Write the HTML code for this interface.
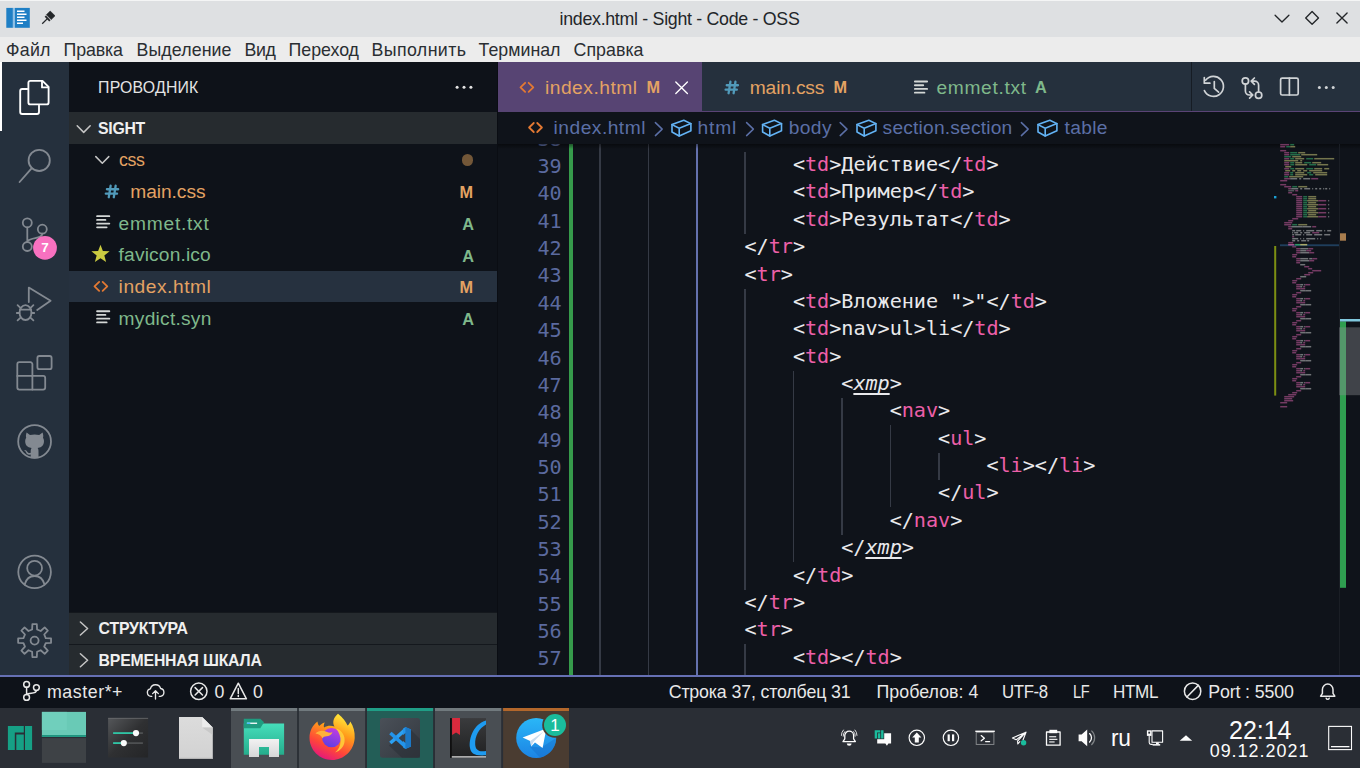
<!DOCTYPE html>
<html lang="ru"><head><meta charset="utf-8"><title>index.html - Sight - Code - OSS</title>
<style>
html,body{margin:0;padding:0;width:1360px;height:768px;overflow:hidden;background:#0f131a;}
body{position:relative;font-family:"Liberation Sans", "DejaVu Sans", sans-serif;-webkit-font-smoothing:antialiased;}
.b{position:absolute;}
.t{position:absolute;white-space:pre;}
svg{position:absolute;overflow:visible;}
.code{position:absolute;white-space:pre;font-family:"DejaVu Sans Mono", "Liberation Mono", monospace;font-size:20.16px;line-height:27.36px;color:#e9e9ec;letter-spacing:-0.04px;}
.code i{font-style:normal;color:#ec5fa8;}
.code u{font-style:italic;text-decoration:underline;text-decoration-thickness:1.5px;text-underline-offset:3px;text-decoration-skip-ink:none;}
.ln{position:absolute;white-space:pre;font-family:"DejaVu Sans Mono", "Liberation Mono", monospace;font-size:20.16px;letter-spacing:-0.1px;line-height:27.36px;color:#5b6a9f;text-align:right;width:60px;}
</style></head><body>
<div class="b" style="left:0px;top:0px;width:1360px;height:37px;background:#dee0e2;"></div>
<div class="b" style="left:0px;top:0px;width:1360px;height:1px;background:#f4f5f5;"></div>
<div class="b" style="left:0px;top:37px;width:1360px;height:25px;background:#ececec;"></div>
<span class="t" style="left:559.6px;top:7.37px;font-size:17.8px;line-height:24.92px;color:#232629;letter-spacing:-0.295px;">index.html - Sight - Code - OSS</span>
<span class="t" style="left:6px;top:37.77px;font-size:17.8px;line-height:24.92px;color:#2a2e32;letter-spacing:0.26px;">Файл</span>
<span class="t" style="left:63.5px;top:37.77px;font-size:17.8px;line-height:24.92px;color:#2a2e32;letter-spacing:-0.116px;">Правка</span>
<span class="t" style="left:136.5px;top:37.77px;font-size:17.8px;line-height:24.92px;color:#2a2e32;letter-spacing:0.096px;">Выделение</span>
<span class="t" style="left:244.5px;top:37.77px;font-size:17.8px;line-height:24.92px;color:#2a2e32;letter-spacing:-0.336px;">Вид</span>
<span class="t" style="left:288.5px;top:37.77px;font-size:17.8px;line-height:24.92px;color:#2a2e32;letter-spacing:-0.021px;">Переход</span>
<span class="t" style="left:371.5px;top:37.77px;font-size:17.8px;line-height:24.92px;color:#2a2e32;letter-spacing:0.398px;">Выполнить</span>
<span class="t" style="left:478.5px;top:37.77px;font-size:17.8px;line-height:24.92px;color:#2a2e32;letter-spacing:0.016px;">Терминал</span>
<span class="t" style="left:573.5px;top:37.77px;font-size:17.8px;line-height:24.92px;color:#2a2e32;letter-spacing:0.039px;">Справка</span>
<div class="b" style="left:0px;top:62.0px;width:69.1px;height:614.3px;background:#25303d;"></div>
<div class="b" style="left:69.1px;top:62.0px;width:428.9px;height:614.3px;background:#0e1219;"></div>
<div class="b" style="left:497px;top:62.0px;width:1px;height:614.3px;background:#0a0d13;"></div>
<div class="b" style="left:498px;top:62.0px;width:862px;height:614.3px;background:#0f131a;"></div>
<div class="b" style="left:0px;top:62.0px;width:2.2px;height:69.1px;background:#ffffff;"></div>
<span class="t" style="left:98.1px;top:77.22px;font-size:15.84px;line-height:22.18px;color:#e4e4e4;letter-spacing:0.195px;">ПРОВОДНИК</span>
<div class="b" style="left:69.1px;top:112.4px;width:427.9px;height:31.68px;background:#262b2f;"></div>
<span class="t" style="left:98.1px;top:118.22px;font-size:15.84px;line-height:22.18px;color:#f0f0f0;letter-spacing:-0.319px;font-weight:700;">SIGHT</span>
<div class="b" style="left:69.1px;top:270.8px;width:427.9px;height:31.68px;background:#26313f;"></div>
<span class="t" style="left:118.6px;top:147.31px;font-size:19.2px;line-height:26.88px;color:#e3a263;letter-spacing:-0.35px;transform:scaleX(0.9259);transform-origin:0 0;">css</span>
<span class="t" style="left:130.3px;top:178.99px;font-size:19.2px;line-height:26.88px;color:#e3a263;letter-spacing:-0.072px;">main.css</span>
<span class="t" style="left:118.6px;top:210.67px;font-size:19.2px;line-height:26.88px;color:#7fb88b;letter-spacing:0.746px;">emmet.txt</span>
<span class="t" style="left:118.6px;top:242.35px;font-size:19.2px;line-height:26.88px;color:#7fb88b;letter-spacing:0.154px;">favicon.ico</span>
<span class="t" style="left:118.6px;top:274.03px;font-size:19.2px;line-height:26.88px;color:#e3a263;letter-spacing:0.527px;">index.html</span>
<span class="t" style="left:118.6px;top:305.71px;font-size:19.2px;line-height:26.88px;color:#7fb88b;letter-spacing:0.24px;">mydict.syn</span>
<span class="t" style="left:459.4px;top:181.22px;font-size:16.3px;line-height:22.82px;color:#e3a263;letter-spacing:0px;font-weight:700;">M</span>
<span class="t" style="left:462.2px;top:212.9px;font-size:16.3px;line-height:22.82px;color:#7fb88b;letter-spacing:0px;font-weight:700;">A</span>
<span class="t" style="left:462.2px;top:244.58px;font-size:16.3px;line-height:22.82px;color:#7fb88b;letter-spacing:0px;font-weight:700;">A</span>
<span class="t" style="left:459.4px;top:276.26px;font-size:16.3px;line-height:22.82px;color:#e3a263;letter-spacing:0px;font-weight:700;">M</span>
<span class="t" style="left:462.2px;top:307.94px;font-size:16.3px;line-height:22.82px;color:#7fb88b;letter-spacing:0px;font-weight:700;">A</span>
<div class="b" style="left:461.7px;top:154.32000000000002px;width:11.2px;height:11.2px;border-radius:50%;background:#735738"></div>
<div class="b" style="left:69.1px;top:612.96px;width:427.9px;height:31.68px;background:#262b2f;"></div>
<div class="b" style="left:69.1px;top:644.64px;width:427.9px;height:31.68px;background:#262b2f;"></div>
<div class="b" style="left:69.1px;top:643.7px;width:427.9px;height:1.4px;background:#14181d;"></div>
<div class="b" style="left:69.1px;top:612.2px;width:427.9px;height:1.2px;background:#14181d;"></div>
<span class="t" style="left:98.6px;top:618.12px;font-size:15.84px;line-height:22.18px;color:#f0f0f0;letter-spacing:-0.21px;font-weight:700;">СТРУКТУРА</span>
<span class="t" style="left:98.6px;top:650.02px;font-size:15.84px;line-height:22.18px;color:#f0f0f0;letter-spacing:-0.2px;font-weight:700;">ВРЕМЕННАЯ ШКАЛА</span>
<div class="b" style="left:498px;top:62.0px;width:862px;height:50.4px;background:#25303d;"></div>
<div class="b" style="left:498px;top:62.0px;width:204px;height:50.4px;background:#574473;"></div>
<div class="b" style="left:702px;top:110.6px;width:658px;height:1.4px;background:#5a4375;"></div>
<div class="b" style="left:1191px;top:62.0px;width:1.3px;height:49px;background:#161c24;"></div>
<span class="t" style="left:545px;top:74.81px;font-size:19.2px;line-height:26.88px;color:#e3a263;letter-spacing:0.505px;">index.html</span>
<span class="t" style="left:646.6px;top:76.04px;font-size:16.3px;line-height:22.82px;color:#e3a263;letter-spacing:0px;font-weight:700;">M</span>
<span class="t" style="left:749.8px;top:74.81px;font-size:19.2px;line-height:26.88px;color:#e3a263;letter-spacing:-0.158px;">main.css</span>
<span class="t" style="left:833.5px;top:76.04px;font-size:16.3px;line-height:22.82px;color:#e3a263;letter-spacing:0px;font-weight:700;">M</span>
<span class="t" style="left:936.4px;top:74.81px;font-size:19.2px;line-height:26.88px;color:#7fb88b;letter-spacing:0.683px;">emmet.txt</span>
<span class="t" style="left:1035px;top:76.04px;font-size:16.3px;line-height:22.82px;color:#7fb88b;letter-spacing:0px;font-weight:700;">A</span>
<div class="b" style="left:498px;top:112.4px;width:862px;height:31.1px;background:#0f131a;"></div>
<span class="t" style="left:553.6px;top:115.21px;font-size:19.2px;line-height:26.88px;color:#5b6fa6;letter-spacing:0.483px;">index.html</span>
<span class="t" style="left:697.6px;top:115.21px;font-size:19.2px;line-height:26.88px;color:#5b6fa6;letter-spacing:0.783px;">html</span>
<span class="t" style="left:788.7px;top:115.21px;font-size:19.2px;line-height:26.88px;color:#5b6fa6;letter-spacing:0.397px;">body</span>
<span class="t" style="left:882.6px;top:115.21px;font-size:19.2px;line-height:26.88px;color:#5b6fa6;letter-spacing:0.198px;">section.section</span>
<span class="t" style="left:1064.5px;top:115.21px;font-size:19.2px;line-height:26.88px;color:#5b6fa6;letter-spacing:0.348px;">table</span>
<div class="b" style="left:498px;top:143.5px;width:862px;height:532.8px;overflow:hidden">
<div class="b" style="left:71px;top:0px;width:4.3px;height:532.8px;background:#369b4b;"></div>
<div class="b" style="left:101.2px;top:-73.78px;width:1.44px;height:684.0px;background:#353a45;"></div>
<div class="b" style="left:149.5px;top:-73.78px;width:1.44px;height:684.0px;background:#353a45;"></div>
<div class="b" style="left:198.2px;top:-73.78px;width:1.44px;height:684.0px;background:#6471ad;"></div>
<div class="b" style="left:246.3px;top:8.3px;width:1.44px;height:82.08px;background:#353a45;"></div>
<div class="b" style="left:246.3px;top:145.1px;width:1.44px;height:300.96px;background:#353a45;"></div>
<div class="b" style="left:246.3px;top:500.78px;width:1.44px;height:109.44px;background:#353a45;"></div>
<div class="b" style="left:295.0px;top:227.18px;width:1.44px;height:191.52px;background:#353a45;"></div>
<div class="b" style="left:343.3px;top:254.54px;width:1.44px;height:136.8px;background:#353a45;"></div>
<div class="b" style="left:391.6px;top:281.9px;width:1.44px;height:82.08px;background:#353a45;"></div>
<div class="b" style="left:440.2px;top:309.26px;width:1.44px;height:27.36px;background:#353a45;"></div>
<div class="ln" style="left:3.6000000000000227px;top:-17.86px">38</div>
<div class="ln" style="left:3.6000000000000227px;top:9.5px">39</div>
<div class="code" style="left:294.88px;top:7.6px">&lt;<i>td</i>>Действие&lt;/<i>td</i>></div>
<div class="ln" style="left:3.6000000000000227px;top:36.86px">40</div>
<div class="code" style="left:294.88px;top:34.96px">&lt;<i>td</i>>Пример&lt;/<i>td</i>></div>
<div class="ln" style="left:3.6000000000000227px;top:64.22px">41</div>
<div class="code" style="left:294.88px;top:62.32px">&lt;<i>td</i>>Результат&lt;/<i>td</i>></div>
<div class="ln" style="left:3.6000000000000227px;top:91.58px">42</div>
<div class="code" style="left:246.5px;top:89.68px">&lt;/<i>tr</i>></div>
<div class="ln" style="left:3.6000000000000227px;top:118.94px">43</div>
<div class="code" style="left:246.5px;top:117.04px">&lt;<i>tr</i>></div>
<div class="ln" style="left:3.6000000000000227px;top:146.3px">44</div>
<div class="code" style="left:294.88px;top:144.4px">&lt;<i>td</i>>Вложение ">"&lt;/<i>td</i>></div>
<div class="ln" style="left:3.6000000000000227px;top:173.66px">45</div>
<div class="code" style="left:294.88px;top:171.76px">&lt;<i>td</i>>nav>ul>li&lt;/<i>td</i>></div>
<div class="ln" style="left:3.6000000000000227px;top:201.02px">46</div>
<div class="code" style="left:294.88px;top:199.12px">&lt;<i>td</i>></div>
<div class="ln" style="left:3.6000000000000227px;top:228.38px">47</div>
<div class="code" style="left:343.27px;top:226.48px">&lt;<u>xmp</u>></div>
<div class="ln" style="left:3.6000000000000227px;top:255.74px">48</div>
<div class="code" style="left:391.65px;top:253.84px">&lt;<i>nav</i>></div>
<div class="ln" style="left:3.6000000000000227px;top:283.1px">49</div>
<div class="code" style="left:440.04px;top:281.2px">&lt;<i>ul</i>></div>
<div class="ln" style="left:3.6000000000000227px;top:310.46px">50</div>
<div class="code" style="left:488.42px;top:308.56px">&lt;<i>li</i>>&lt;/<i>li</i>></div>
<div class="ln" style="left:3.6000000000000227px;top:337.82px">51</div>
<div class="code" style="left:440.04px;top:335.92px">&lt;/<i>ul</i>></div>
<div class="ln" style="left:3.6000000000000227px;top:365.18px">52</div>
<div class="code" style="left:391.65px;top:363.28px">&lt;/<i>nav</i>></div>
<div class="ln" style="left:3.6000000000000227px;top:392.54px">53</div>
<div class="code" style="left:343.27px;top:390.64px">&lt;/<u>xmp</u>></div>
<div class="ln" style="left:3.6000000000000227px;top:419.9px">54</div>
<div class="code" style="left:294.88px;top:418.0px">&lt;/<i>td</i>></div>
<div class="ln" style="left:3.6000000000000227px;top:447.26px">55</div>
<div class="code" style="left:246.5px;top:445.36px">&lt;/<i>tr</i>></div>
<div class="ln" style="left:3.6000000000000227px;top:474.62px">56</div>
<div class="code" style="left:246.5px;top:472.72px">&lt;<i>tr</i>></div>
<div class="ln" style="left:3.6000000000000227px;top:501.98px">57</div>
<div class="code" style="left:294.88px;top:500.08px">&lt;<i>td</i>>&lt;/<i>td</i>></div>
<div class="b" style="left:0;top:0;width:862px;height:5px;background:linear-gradient(#0007,#0000)"></div>
</div>
<svg style="left:0px;top:0px" width="1360" height="768" viewBox="0 0 1360 768" ><g opacity="0.66"><rect x="1280.2" y="143.95" width="9.0" height="1.5" fill="#a8508a"/><rect x="1290.2" y="143.95" width="4.0" height="1.5" fill="#2f9a62"/><rect x="1280.2" y="145.95" width="5.0" height="1.5" fill="#a8508a"/><rect x="1286.2" y="145.95" width="4.0" height="1.5" fill="#2f9a62"/><rect x="1290.2" y="145.95" width="5.0" height="1.5" fill="#a9a868"/><rect x="1280.2" y="149.95" width="6.0" height="1.5" fill="#a8508a"/><rect x="1284.2" y="151.95" width="5.0" height="1.5" fill="#a8508a"/><rect x="1290.2" y="151.95" width="7.0" height="1.5" fill="#2f9a62"/><rect x="1298.2" y="151.95" width="7.0" height="1.5" fill="#a9a868"/><rect x="1284.2" y="153.95" width="5.0" height="1.5" fill="#a8508a"/><rect x="1290.2" y="153.95" width="10.0" height="1.5" fill="#2f9a62"/><rect x="1301.2" y="153.95" width="16.0" height="1.5" fill="#a9a868"/><rect x="1284.2" y="155.95" width="7.0" height="1.5" fill="#2f9a62"/><rect x="1292.2" y="155.95" width="9.0" height="1.5" fill="#a9a868"/><rect x="1284.2" y="157.95" width="5.0" height="1.5" fill="#a8508a"/><rect x="1290.2" y="157.95" width="4.0" height="1.5" fill="#2f9a62"/><rect x="1295.2" y="157.95" width="9.0" height="1.5" fill="#a9a868"/><rect x="1306.2" y="157.95" width="7.0" height="1.5" fill="#2f9a62"/><rect x="1314.2" y="157.95" width="20.0" height="1.5" fill="#a9a868"/><rect x="1284.2" y="159.95" width="14.0" height="1.5" fill="#a9a868"/><rect x="1300.2" y="159.95" width="2.0" height="1.5" fill="#a9a868"/><rect x="1284.2" y="161.95" width="5.0" height="1.5" fill="#a8508a"/><rect x="1290.2" y="161.95" width="4.0" height="1.5" fill="#2f9a62"/><rect x="1295.2" y="161.95" width="7.0" height="1.5" fill="#a9a868"/><rect x="1304.2" y="161.95" width="7.0" height="1.5" fill="#2f9a62"/><rect x="1312.2" y="161.95" width="9.0" height="1.5" fill="#a9a868"/><rect x="1284.2" y="163.95" width="5.0" height="1.5" fill="#a8508a"/><rect x="1290.2" y="163.95" width="4.0" height="1.5" fill="#2f9a62"/><rect x="1295.2" y="163.95" width="12.0" height="1.5" fill="#a9a868"/><rect x="1309.2" y="163.95" width="7.0" height="1.5" fill="#2f9a62"/><rect x="1317.2" y="163.95" width="11.0" height="1.5" fill="#a9a868"/><rect x="1285.2" y="165.95" width="6.0" height="1.5" fill="#a9a868"/><rect x="1284.2" y="167.95" width="5.0" height="1.5" fill="#a8508a"/><rect x="1290.2" y="167.95" width="4.0" height="1.5" fill="#2f9a62"/><rect x="1295.2" y="167.95" width="9.0" height="1.5" fill="#a9a868"/><rect x="1306.2" y="167.95" width="7.0" height="1.5" fill="#2f9a62"/><rect x="1314.2" y="167.95" width="8.0" height="1.5" fill="#a9a868"/><rect x="1324.2" y="167.95" width="5.0" height="1.5" fill="#a9a868"/><rect x="1285.2" y="169.95" width="5.0" height="1.5" fill="#a9a868"/><rect x="1292.2" y="169.95" width="3.0" height="1.5" fill="#a9a868"/><rect x="1297.2" y="169.95" width="4.0" height="1.5" fill="#a9a868"/><rect x="1303.2" y="169.95" width="4.0" height="1.5" fill="#a9a868"/><rect x="1309.2" y="169.95" width="13.0" height="1.5" fill="#a9a868"/><rect x="1284.2" y="171.95" width="5.0" height="1.5" fill="#a8508a"/><rect x="1290.2" y="171.95" width="3.0" height="1.5" fill="#2f9a62"/><rect x="1295.2" y="171.95" width="9.0" height="1.5" fill="#a9a868"/><rect x="1307.2" y="171.95" width="4.0" height="1.5" fill="#2f9a62"/><rect x="1313.2" y="171.95" width="14.0" height="1.5" fill="#a9a868"/><rect x="1284.2" y="173.95" width="5.0" height="1.5" fill="#a8508a"/><rect x="1290.2" y="173.95" width="3.0" height="1.5" fill="#2f9a62"/><rect x="1295.2" y="173.95" width="12.0" height="1.5" fill="#a9a868"/><rect x="1309.2" y="173.95" width="4.0" height="1.5" fill="#2f9a62"/><rect x="1315.2" y="173.95" width="12.0" height="1.5" fill="#a9a868"/><rect x="1284.2" y="175.95" width="4.0" height="1.5" fill="#2f9a62"/><rect x="1289.2" y="175.95" width="14.0" height="1.5" fill="#a9a868"/><rect x="1284.2" y="177.95" width="6.0" height="1.5" fill="#a8508a"/><rect x="1290.2" y="177.95" width="7.0" height="1.5" fill="#a4a6a8"/><rect x="1299.2" y="177.95" width="2.0" height="1.5" fill="#a4a6a8"/><rect x="1303.2" y="177.95" width="7.0" height="1.5" fill="#a4a6a8"/><rect x="1311.2" y="177.95" width="7.0" height="1.5" fill="#a8508a"/><rect x="1280.2" y="179.95" width="7.0" height="1.5" fill="#a8508a"/><rect x="1280.2" y="183.95" width="6.0" height="1.5" fill="#a8508a"/><rect x="1284.2" y="185.95" width="7.0" height="1.5" fill="#a8508a"/><rect x="1292.2" y="185.95" width="5.0" height="1.5" fill="#2f9a62"/><rect x="1298.2" y="185.95" width="9.0" height="1.5" fill="#a9a868"/><rect x="1288.2" y="187.95" width="3.0" height="1.5" fill="#a8508a"/><rect x="1291.2" y="187.95" width="7.0" height="1.5" fill="#a4a6a8"/><rect x="1300.2" y="187.95" width="2.0" height="1.5" fill="#a4a6a8"/><rect x="1304.2" y="187.95" width="6.0" height="1.5" fill="#a4a6a8"/><rect x="1312.2" y="187.95" width="1.0" height="1.5" fill="#a4a6a8"/><rect x="1315.2" y="187.95" width="2.0" height="1.5" fill="#a4a6a8"/><rect x="1319.2" y="187.95" width="2.0" height="1.5" fill="#a4a6a8"/><rect x="1323.2" y="187.95" width="1.0" height="1.5" fill="#a4a6a8"/><rect x="1325.2" y="187.95" width="2.0" height="1.5" fill="#a4a6a8"/><rect x="1329.2" y="187.95" width="1.0" height="1.5" fill="#a4a6a8"/><rect x="1288.2" y="189.95" width="6.0" height="1.5" fill="#74787d"/><rect x="1295.2" y="189.95" width="3.0" height="1.5" fill="#a8508a"/><rect x="1288.2" y="191.95" width="4.0" height="1.5" fill="#a8508a"/><rect x="1292.2" y="193.95" width="5.0" height="1.5" fill="#a8508a"/><rect x="1296.2" y="195.95" width="6.0" height="1.5" fill="#a8508a"/><rect x="1303.2" y="195.95" width="4.0" height="1.5" fill="#2f9a62"/><rect x="1308.2" y="195.95" width="8.0" height="1.5" fill="#a9a868"/><rect x="1296.2" y="197.95" width="6.0" height="1.5" fill="#a8508a"/><rect x="1303.2" y="197.95" width="4.0" height="1.5" fill="#2f9a62"/><rect x="1308.2" y="197.95" width="8.0" height="1.5" fill="#a9a868"/><rect x="1296.2" y="199.95" width="6.0" height="1.5" fill="#a8508a"/><rect x="1303.2" y="199.95" width="4.0" height="1.5" fill="#2f9a62"/><rect x="1307.2" y="199.95" width="11.0" height="1.5" fill="#a9a868"/><rect x="1318.2" y="199.95" width="8.0" height="1.5" fill="#a8508a"/><rect x="1328.2" y="199.95" width="1.0" height="1.5" fill="#a4a6a8"/><rect x="1296.2" y="201.95" width="6.0" height="1.5" fill="#a8508a"/><rect x="1303.2" y="201.95" width="4.0" height="1.5" fill="#2f9a62"/><rect x="1308.2" y="201.95" width="8.0" height="1.5" fill="#a9a868"/><rect x="1296.2" y="203.95" width="6.0" height="1.5" fill="#a8508a"/><rect x="1303.2" y="203.95" width="4.0" height="1.5" fill="#2f9a62"/><rect x="1307.2" y="203.95" width="11.0" height="1.5" fill="#a9a868"/><rect x="1318.2" y="203.95" width="8.0" height="1.5" fill="#a8508a"/><rect x="1328.2" y="203.95" width="1.0" height="1.5" fill="#a4a6a8"/><rect x="1296.2" y="205.95" width="6.0" height="1.5" fill="#a8508a"/><rect x="1303.2" y="205.95" width="4.0" height="1.5" fill="#2f9a62"/><rect x="1308.2" y="205.95" width="8.0" height="1.5" fill="#a9a868"/><rect x="1296.2" y="207.95" width="6.0" height="1.5" fill="#a8508a"/><rect x="1303.2" y="207.95" width="4.0" height="1.5" fill="#2f9a62"/><rect x="1307.2" y="207.95" width="11.0" height="1.5" fill="#a9a868"/><rect x="1318.2" y="207.95" width="8.0" height="1.5" fill="#a8508a"/><rect x="1328.2" y="207.95" width="1.0" height="1.5" fill="#a4a6a8"/><rect x="1296.2" y="209.95" width="6.0" height="1.5" fill="#a8508a"/><rect x="1303.2" y="209.95" width="4.0" height="1.5" fill="#2f9a62"/><rect x="1308.2" y="209.95" width="8.0" height="1.5" fill="#a9a868"/><rect x="1296.2" y="211.95" width="6.0" height="1.5" fill="#a8508a"/><rect x="1303.2" y="211.95" width="4.0" height="1.5" fill="#2f9a62"/><rect x="1307.2" y="211.95" width="11.0" height="1.5" fill="#a9a868"/><rect x="1318.2" y="211.95" width="8.0" height="1.5" fill="#a8508a"/><rect x="1328.2" y="211.95" width="1.0" height="1.5" fill="#a4a6a8"/><rect x="1296.2" y="213.95" width="6.0" height="1.5" fill="#a8508a"/><rect x="1303.2" y="213.95" width="4.0" height="1.5" fill="#2f9a62"/><rect x="1308.2" y="213.95" width="8.0" height="1.5" fill="#a9a868"/><rect x="1296.2" y="215.95" width="6.0" height="1.5" fill="#a8508a"/><rect x="1303.2" y="215.95" width="4.0" height="1.5" fill="#2f9a62"/><rect x="1307.2" y="215.95" width="11.0" height="1.5" fill="#a9a868"/><rect x="1318.2" y="215.95" width="8.0" height="1.5" fill="#a8508a"/><rect x="1328.2" y="215.95" width="1.0" height="1.5" fill="#a4a6a8"/><rect x="1292.2" y="217.95" width="6.0" height="1.5" fill="#a8508a"/><rect x="1288.2" y="219.95" width="5.0" height="1.5" fill="#a8508a"/><rect x="1284.2" y="221.95" width="8.0" height="1.5" fill="#a8508a"/><rect x="1284.2" y="223.95" width="7.0" height="1.5" fill="#a8508a"/><rect x="1292.2" y="223.95" width="5.0" height="1.5" fill="#2f9a62"/><rect x="1298.2" y="223.95" width="9.0" height="1.5" fill="#a9a868"/><rect x="1288.2" y="225.95" width="3.0" height="1.5" fill="#a8508a"/><rect x="1291.2" y="225.95" width="11.0" height="1.5" fill="#a4a6a8"/><rect x="1302.2" y="225.95" width="9.0" height="1.5" fill="#a4a6a8"/><rect x="1312.2" y="225.95" width="4.0" height="1.5" fill="#a8508a"/><rect x="1288.2" y="227.95" width="4.0" height="1.5" fill="#a8508a"/><rect x="1292.2" y="229.95" width="3.0" height="1.5" fill="#a4a6a8"/><rect x="1296.2" y="229.95" width="5.0" height="1.5" fill="#a4a6a8"/><rect x="1303.2" y="229.95" width="1.0" height="1.5" fill="#a4a6a8"/><rect x="1306.2" y="229.95" width="8.0" height="1.5" fill="#a4a6a8"/><rect x="1316.2" y="229.95" width="6.0" height="1.5" fill="#a4a6a8"/><rect x="1324.2" y="229.95" width="1.0" height="1.5" fill="#a4a6a8"/><rect x="1327.2" y="229.95" width="4.0" height="1.5" fill="#a4a6a8"/><rect x="1292.2" y="231.95" width="1.0" height="1.5" fill="#a4a6a8"/><rect x="1294.2" y="231.95" width="4.0" height="1.5" fill="#a4a6a8"/><rect x="1300.2" y="231.95" width="2.0" height="1.5" fill="#a4a6a8"/><rect x="1304.2" y="231.95" width="6.0" height="1.5" fill="#a4a6a8"/><rect x="1312.2" y="231.95" width="7.0" height="1.5" fill="#a8508a"/><rect x="1292.2" y="233.95" width="2.0" height="1.5" fill="#a4a6a8"/><rect x="1295.2" y="233.95" width="6.0" height="1.5" fill="#a4a6a8"/><rect x="1303.2" y="233.95" width="1.0" height="1.5" fill="#a4a6a8"/><rect x="1306.2" y="233.95" width="6.0" height="1.5" fill="#a4a6a8"/><rect x="1314.2" y="233.95" width="8.0" height="1.5" fill="#a4a6a8"/><rect x="1324.2" y="233.95" width="6.0" height="1.5" fill="#a4a6a8"/><rect x="1292.2" y="235.95" width="2.0" height="1.5" fill="#a8508a"/><rect x="1292.2" y="237.95" width="6.0" height="1.5" fill="#a4a6a8"/><rect x="1300.2" y="237.95" width="1.0" height="1.5" fill="#a4a6a8"/><rect x="1303.2" y="237.95" width="1.0" height="1.5" fill="#a4a6a8"/><rect x="1306.2" y="237.95" width="9.0" height="1.5" fill="#a4a6a8"/><rect x="1317.2" y="237.95" width="1.0" height="1.5" fill="#a4a6a8"/><rect x="1320.2" y="237.95" width="1.0" height="1.5" fill="#a4a6a8"/><rect x="1292.2" y="239.95" width="3.0" height="1.5" fill="#a4a6a8"/><rect x="1297.2" y="239.95" width="2.0" height="1.5" fill="#a4a6a8"/><rect x="1301.2" y="239.95" width="5.0" height="1.5" fill="#a4a6a8"/><rect x="1307.2" y="239.95" width="2.0" height="1.5" fill="#a4a6a8"/><rect x="1288.2" y="241.95" width="5.0" height="1.5" fill="#a8508a"/><rect x="1288.2" y="243.95" width="6.0" height="1.5" fill="#a8508a"/><rect x="1295.2" y="243.95" width="5.0" height="1.5" fill="#2f9a62"/><rect x="1300.2" y="243.95" width="7.0" height="1.5" fill="#a9a868"/><rect x="1292.2" y="245.95" width="4.0" height="1.5" fill="#a8508a"/><rect x="1296.2" y="247.95" width="4.0" height="1.5" fill="#a8508a"/><rect x="1300.2" y="247.95" width="8.0" height="1.5" fill="#a4a6a8"/><rect x="1308.2" y="247.95" width="5.0" height="1.5" fill="#a8508a"/><rect x="1296.2" y="249.95" width="4.0" height="1.5" fill="#a8508a"/><rect x="1300.2" y="249.95" width="6.0" height="1.5" fill="#a4a6a8"/><rect x="1306.2" y="249.95" width="5.0" height="1.5" fill="#a8508a"/><rect x="1296.2" y="251.95" width="4.0" height="1.5" fill="#a8508a"/><rect x="1300.2" y="251.95" width="9.0" height="1.5" fill="#a4a6a8"/><rect x="1309.2" y="251.95" width="5.0" height="1.5" fill="#a8508a"/><rect x="1292.2" y="253.95" width="5.0" height="1.5" fill="#a8508a"/><rect x="1292.2" y="255.95" width="4.0" height="1.5" fill="#a8508a"/><rect x="1296.2" y="257.95" width="4.0" height="1.5" fill="#a8508a"/><rect x="1300.2" y="257.95" width="8.0" height="1.5" fill="#a4a6a8"/><rect x="1309.2" y="257.95" width="3.0" height="1.5" fill="#a4a6a8"/><rect x="1312.2" y="257.95" width="5.0" height="1.5" fill="#a8508a"/><rect x="1296.2" y="259.95" width="4.0" height="1.5" fill="#a8508a"/><rect x="1300.2" y="259.95" width="9.0" height="1.5" fill="#a4a6a8"/><rect x="1309.2" y="259.95" width="5.0" height="1.5" fill="#a8508a"/><rect x="1296.2" y="261.95" width="4.0" height="1.5" fill="#a8508a"/><rect x="1300.2" y="263.95" width="5.0" height="1.5" fill="#a4a6a8"/><rect x="1304.2" y="265.95" width="5.0" height="1.5" fill="#a8508a"/><rect x="1308.2" y="267.95" width="4.0" height="1.5" fill="#a8508a"/><rect x="1312.2" y="269.95" width="9.0" height="1.5" fill="#a8508a"/><rect x="1308.2" y="271.95" width="5.0" height="1.5" fill="#a8508a"/><rect x="1304.2" y="273.95" width="6.0" height="1.5" fill="#a8508a"/><rect x="1300.2" y="275.95" width="6.0" height="1.5" fill="#a4a6a8"/><rect x="1296.2" y="277.95" width="5.0" height="1.5" fill="#a8508a"/><rect x="1292.2" y="279.95" width="5.0" height="1.5" fill="#a8508a"/><rect x="1292.2" y="281.95" width="4.0" height="1.5" fill="#a8508a"/><rect x="1296.2" y="283.95" width="4.0" height="1.5" fill="#a8508a"/><rect x="1300.2" y="283.95" width="3.0" height="1.5" fill="#a4a6a8"/><rect x="1304.2" y="283.95" width="1.0" height="1.5" fill="#a4a6a8"/><rect x="1305.2" y="283.95" width="5.0" height="1.5" fill="#a8508a"/><rect x="1296.2" y="285.95" width="4.0" height="1.5" fill="#a8508a"/><rect x="1300.2" y="285.95" width="2.0" height="1.5" fill="#a4a6a8"/><rect x="1303.2" y="285.95" width="2.0" height="1.5" fill="#a8508a"/><rect x="1296.2" y="287.95" width="4.0" height="1.5" fill="#a8508a"/><rect x="1300.2" y="287.95" width="5.0" height="1.5" fill="#a8508a"/><rect x="1300.2" y="289.95" width="5.0" height="1.5" fill="#a4a6a8"/><rect x="1305.2" y="289.95" width="6.0" height="1.5" fill="#a4a6a8"/><rect x="1296.2" y="291.95" width="5.0" height="1.5" fill="#a8508a"/><rect x="1292.2" y="293.95" width="5.0" height="1.5" fill="#a8508a"/><rect x="1292.2" y="295.95" width="4.0" height="1.5" fill="#a8508a"/><rect x="1296.2" y="297.95" width="4.0" height="1.5" fill="#a8508a"/><rect x="1300.2" y="297.95" width="3.0" height="1.5" fill="#a4a6a8"/><rect x="1304.2" y="297.95" width="1.0" height="1.5" fill="#a4a6a8"/><rect x="1305.2" y="297.95" width="5.0" height="1.5" fill="#a8508a"/><rect x="1296.2" y="299.95" width="4.0" height="1.5" fill="#a8508a"/><rect x="1300.2" y="299.95" width="2.0" height="1.5" fill="#a4a6a8"/><rect x="1303.2" y="299.95" width="2.0" height="1.5" fill="#a8508a"/><rect x="1296.2" y="301.95" width="4.0" height="1.5" fill="#a8508a"/><rect x="1300.2" y="301.95" width="5.0" height="1.5" fill="#a8508a"/><rect x="1300.2" y="303.95" width="5.0" height="1.5" fill="#a4a6a8"/><rect x="1305.2" y="303.95" width="6.0" height="1.5" fill="#a4a6a8"/><rect x="1296.2" y="305.95" width="5.0" height="1.5" fill="#a8508a"/><rect x="1292.2" y="307.95" width="5.0" height="1.5" fill="#a8508a"/><rect x="1292.2" y="309.95" width="4.0" height="1.5" fill="#a8508a"/><rect x="1296.2" y="311.95" width="4.0" height="1.5" fill="#a8508a"/><rect x="1300.2" y="311.95" width="3.0" height="1.5" fill="#a4a6a8"/><rect x="1304.2" y="311.95" width="1.0" height="1.5" fill="#a4a6a8"/><rect x="1305.2" y="311.95" width="5.0" height="1.5" fill="#a8508a"/><rect x="1296.2" y="313.95" width="4.0" height="1.5" fill="#a8508a"/><rect x="1300.2" y="313.95" width="2.0" height="1.5" fill="#a4a6a8"/><rect x="1303.2" y="313.95" width="2.0" height="1.5" fill="#a8508a"/><rect x="1296.2" y="315.95" width="4.0" height="1.5" fill="#a8508a"/><rect x="1300.2" y="315.95" width="5.0" height="1.5" fill="#a8508a"/><rect x="1300.2" y="317.95" width="5.0" height="1.5" fill="#a4a6a8"/><rect x="1305.2" y="317.95" width="6.0" height="1.5" fill="#a4a6a8"/><rect x="1296.2" y="319.95" width="5.0" height="1.5" fill="#a8508a"/><rect x="1292.2" y="321.95" width="5.0" height="1.5" fill="#a8508a"/><rect x="1292.2" y="323.95" width="4.0" height="1.5" fill="#a8508a"/><rect x="1296.2" y="325.95" width="4.0" height="1.5" fill="#a8508a"/><rect x="1300.2" y="325.95" width="3.0" height="1.5" fill="#a4a6a8"/><rect x="1304.2" y="325.95" width="1.0" height="1.5" fill="#a4a6a8"/><rect x="1305.2" y="325.95" width="5.0" height="1.5" fill="#a8508a"/><rect x="1296.2" y="327.95" width="4.0" height="1.5" fill="#a8508a"/><rect x="1300.2" y="327.95" width="2.0" height="1.5" fill="#a4a6a8"/><rect x="1303.2" y="327.95" width="2.0" height="1.5" fill="#a8508a"/><rect x="1296.2" y="329.95" width="4.0" height="1.5" fill="#a8508a"/><rect x="1300.2" y="329.95" width="5.0" height="1.5" fill="#a8508a"/><rect x="1300.2" y="331.95" width="5.0" height="1.5" fill="#a4a6a8"/><rect x="1305.2" y="331.95" width="6.0" height="1.5" fill="#a4a6a8"/><rect x="1296.2" y="333.95" width="5.0" height="1.5" fill="#a8508a"/><rect x="1292.2" y="335.95" width="5.0" height="1.5" fill="#a8508a"/><rect x="1292.2" y="337.95" width="4.0" height="1.5" fill="#a8508a"/><rect x="1296.2" y="339.95" width="4.0" height="1.5" fill="#a8508a"/><rect x="1300.2" y="339.95" width="3.0" height="1.5" fill="#a4a6a8"/><rect x="1304.2" y="339.95" width="1.0" height="1.5" fill="#a4a6a8"/><rect x="1305.2" y="339.95" width="5.0" height="1.5" fill="#a8508a"/><rect x="1296.2" y="341.95" width="4.0" height="1.5" fill="#a8508a"/><rect x="1300.2" y="341.95" width="2.0" height="1.5" fill="#a4a6a8"/><rect x="1303.2" y="341.95" width="2.0" height="1.5" fill="#a8508a"/><rect x="1296.2" y="343.95" width="4.0" height="1.5" fill="#a8508a"/><rect x="1300.2" y="343.95" width="5.0" height="1.5" fill="#a8508a"/><rect x="1300.2" y="345.95" width="5.0" height="1.5" fill="#a4a6a8"/><rect x="1305.2" y="345.95" width="6.0" height="1.5" fill="#a4a6a8"/><rect x="1296.2" y="347.95" width="5.0" height="1.5" fill="#a8508a"/><rect x="1292.2" y="349.95" width="5.0" height="1.5" fill="#a8508a"/><rect x="1292.2" y="351.95" width="4.0" height="1.5" fill="#a8508a"/><rect x="1296.2" y="353.95" width="4.0" height="1.5" fill="#a8508a"/><rect x="1300.2" y="353.95" width="3.0" height="1.5" fill="#a4a6a8"/><rect x="1304.2" y="353.95" width="1.0" height="1.5" fill="#a4a6a8"/><rect x="1305.2" y="353.95" width="5.0" height="1.5" fill="#a8508a"/><rect x="1296.2" y="355.95" width="4.0" height="1.5" fill="#a8508a"/><rect x="1300.2" y="355.95" width="2.0" height="1.5" fill="#a4a6a8"/><rect x="1303.2" y="355.95" width="2.0" height="1.5" fill="#a8508a"/><rect x="1296.2" y="357.95" width="4.0" height="1.5" fill="#a8508a"/><rect x="1300.2" y="357.95" width="5.0" height="1.5" fill="#a8508a"/><rect x="1300.2" y="359.95" width="5.0" height="1.5" fill="#a4a6a8"/><rect x="1305.2" y="359.95" width="6.0" height="1.5" fill="#a4a6a8"/><rect x="1296.2" y="361.95" width="5.0" height="1.5" fill="#a8508a"/><rect x="1292.2" y="363.95" width="5.0" height="1.5" fill="#a8508a"/><rect x="1292.2" y="365.95" width="4.0" height="1.5" fill="#a8508a"/><rect x="1296.2" y="367.95" width="4.0" height="1.5" fill="#a8508a"/><rect x="1300.2" y="367.95" width="3.0" height="1.5" fill="#a4a6a8"/><rect x="1304.2" y="367.95" width="1.0" height="1.5" fill="#a4a6a8"/><rect x="1305.2" y="367.95" width="5.0" height="1.5" fill="#a8508a"/><rect x="1296.2" y="369.95" width="4.0" height="1.5" fill="#a8508a"/><rect x="1300.2" y="369.95" width="2.0" height="1.5" fill="#a4a6a8"/><rect x="1303.2" y="369.95" width="2.0" height="1.5" fill="#a8508a"/><rect x="1296.2" y="371.95" width="4.0" height="1.5" fill="#a8508a"/><rect x="1300.2" y="371.95" width="5.0" height="1.5" fill="#a8508a"/><rect x="1300.2" y="373.95" width="5.0" height="1.5" fill="#a4a6a8"/><rect x="1305.2" y="373.95" width="6.0" height="1.5" fill="#a4a6a8"/><rect x="1296.2" y="375.95" width="5.0" height="1.5" fill="#a8508a"/><rect x="1292.2" y="377.95" width="5.0" height="1.5" fill="#a8508a"/><rect x="1292.2" y="379.95" width="4.0" height="1.5" fill="#a8508a"/><rect x="1296.2" y="381.95" width="4.0" height="1.5" fill="#a8508a"/><rect x="1300.2" y="381.95" width="3.0" height="1.5" fill="#a4a6a8"/><rect x="1304.2" y="381.95" width="1.0" height="1.5" fill="#a4a6a8"/><rect x="1305.2" y="381.95" width="5.0" height="1.5" fill="#a8508a"/><rect x="1296.2" y="383.95" width="4.0" height="1.5" fill="#a8508a"/><rect x="1300.2" y="383.95" width="2.0" height="1.5" fill="#a4a6a8"/><rect x="1303.2" y="383.95" width="2.0" height="1.5" fill="#a8508a"/><rect x="1296.2" y="385.95" width="4.0" height="1.5" fill="#a8508a"/><rect x="1300.2" y="385.95" width="5.0" height="1.5" fill="#a8508a"/><rect x="1300.2" y="387.95" width="5.0" height="1.5" fill="#a4a6a8"/><rect x="1305.2" y="387.95" width="6.0" height="1.5" fill="#a4a6a8"/><rect x="1296.2" y="389.95" width="5.0" height="1.5" fill="#a8508a"/><rect x="1292.2" y="391.95" width="5.0" height="1.5" fill="#a8508a"/><rect x="1288.2" y="393.95" width="8.0" height="1.5" fill="#a8508a"/><rect x="1284.2" y="395.95" width="10.0" height="1.5" fill="#a8508a"/><rect x="1284.2" y="397.95" width="8.0" height="1.5" fill="#a8508a"/><rect x="1284.2" y="399.95" width="9.0" height="1.5" fill="#a8508a"/><rect x="1280.2" y="401.95" width="7.0" height="1.5" fill="#a8508a"/><rect x="1280.2" y="405.95" width="7.0" height="1.5" fill="#a8508a"/></g><rect x="1280" y="244.3" width="59" height="1.9" fill="#1f3e5c"/><rect x="1288.2" y="243.95" width="6.0" height="1.5" fill="#a8508a"/><rect x="1295.2" y="243.95" width="5.0" height="1.5" fill="#2f9a62"/><rect x="1300.2" y="243.95" width="7.0" height="1.5" fill="#a9a868"/><rect x="1274" y="196" width="2.4" height="2.4" fill="#1b9fd3"/><rect x="1274.2" y="246" width="2" height="149.6" fill="#7d8f12"/><rect x="1339" y="144" width="1" height="532" fill="#1a1e25"/><rect x="1340" y="233.3" width="6" height="7.4" fill="#a87d4e"/><rect x="1340" y="321.4" width="6" height="266.4" fill="#2f9e50"/><rect x="1340" y="319" width="20" height="2.5" fill="#80c8de"/><rect x="1339" y="327.3" width="21" height="67.9" fill="#8a8d91" fill-opacity="0.4"/></svg>
<div class="b" style="left:0px;top:676.3px;width:1360px;height:31.700000000000045px;background:#0e1219;"></div>
<div class="b" style="left:0px;top:675px;width:1360px;height:2.4px;background:#6670b4;"></div>
<span class="t" style="left:47px;top:680.07px;font-size:17.8px;line-height:24.92px;color:#e8e8e8;letter-spacing:0.549px;">master*+</span>
<span class="t" style="left:214.5px;top:680.07px;font-size:17.8px;line-height:24.92px;color:#e8e8e8;letter-spacing:0px;">0</span>
<span class="t" style="left:253px;top:680.07px;font-size:17.8px;line-height:24.92px;color:#e8e8e8;letter-spacing:0px;">0</span>
<span class="t" style="left:668.7px;top:680.07px;font-size:17.8px;line-height:24.92px;color:#e8e8e8;letter-spacing:-0.15px;">Строка 37, столбец 31</span>
<span class="t" style="left:876.5px;top:680.07px;font-size:17.8px;line-height:24.92px;color:#e8e8e8;letter-spacing:0.037px;">Пробелов: 4</span>
<span class="t" style="left:1002px;top:680.07px;font-size:17.8px;line-height:24.92px;color:#e8e8e8;letter-spacing:-0.35px;transform:scaleX(0.9433);transform-origin:0 0;">UTF-8</span>
<span class="t" style="left:1072.8px;top:680.07px;font-size:17.8px;line-height:24.92px;color:#e8e8e8;letter-spacing:-0.35px;transform:scaleX(0.8180);transform-origin:0 0;">LF</span>
<span class="t" style="left:1113.3px;top:680.07px;font-size:17.8px;line-height:24.92px;color:#e8e8e8;letter-spacing:-0.35px;transform:scaleX(0.9608);transform-origin:0 0;">HTML</span>
<span class="t" style="left:1208.3px;top:680.07px;font-size:17.8px;line-height:24.92px;color:#e8e8e8;letter-spacing:-0.15px;">Port : 5500</span>
<div class="b" style="left:0px;top:708px;width:1360px;height:60px;background:#2a2e35;"></div>
<svg style="left:0px;top:0px" width="1360" height="768" viewBox="0 0 1360 768" ><defs>
<linearGradient id="gset" x1="0" y1="0" x2="1" y2="1"><stop offset="0" stop-color="#55575a"/><stop offset="0.5" stop-color="#2f3032"/><stop offset="1" stop-color="#242527"/></linearGradient>
<linearGradient id="gdoc" x1="0" y1="0" x2="0" y2="1"><stop offset="0" stop-color="#dcdcdc"/><stop offset="1" stop-color="#d2d2d2"/></linearGradient>
<linearGradient id="gfold" x1="0" y1="0" x2="0" y2="1"><stop offset="0" stop-color="#46debb"/><stop offset="1" stop-color="#25ad8c"/></linearGradient>
<linearGradient id="ghouse" x1="0" y1="0" x2="0" y2="1"><stop offset="0" stop-color="#f2f2f2"/><stop offset="1" stop-color="#d5d7d8"/></linearGradient>
<linearGradient id="gff" x1="0.75" y1="0.05" x2="0.3" y2="1"><stop offset="0" stop-color="#ffe83a"/><stop offset="0.35" stop-color="#ff9a1a"/><stop offset="0.7" stop-color="#ff4639"/><stop offset="1" stop-color="#e3157f"/></linearGradient>
<linearGradient id="gffg" x1="0.7" y1="0" x2="0.3" y2="1"><stop offset="0" stop-color="#c53be0"/><stop offset="1" stop-color="#5b3fe4"/></linearGradient>
<linearGradient id="gvs" x1="0" y1="0" x2="1" y2="1"><stop offset="0" stop-color="#4a5058"/><stop offset="1" stop-color="#33383f"/></linearGradient>
<linearGradient id="gbook" x1="0" y1="0" x2="0" y2="1"><stop offset="0" stop-color="#3a3b3d"/><stop offset="1" stop-color="#202122"/></linearGradient>
<linearGradient id="gtg" x1="0" y1="0" x2="0" y2="1"><stop offset="0" stop-color="#2ab7f7"/><stop offset="1" stop-color="#1c84e4"/></linearGradient>
</defs><path fill="#16a085" d="M7.9 725.9 H23.8 V732.6 H14.8 V750 H7.9 Z M16.3 734.4 H23.8 V750 H16.3 Z M25 725.9 H32.1 V750 H25 Z"/><rect x="41.9" y="711.9" width="44.1" height="25" fill="#69cab6" /><rect x="41.9" y="711.9" width="25" height="18.2" fill="#70cfbc" /><rect x="41.9" y="735" width="44.1" height="1.9" fill="#1f957f" /><rect x="41.9" y="738.1" width="44.1" height="24.8" fill="#3e4246" /><rect x="108.1" y="717.9" width="40" height="39.6" fill="url(#gset)" /><rect x="108.1" y="717.9" width="40" height="0.8" fill="#6a6c6e" /><rect x="113.1" y="732.2" width="29.8" height="1.8" fill="#4e5052" /><rect x="113.1" y="732.2" width="22" height="1.8" fill="#2ec4a4" /><circle cx="136" cy="733.1" r="3.1" fill="#fafafa"/><rect x="113.1" y="742.2" width="29.8" height="1.8" fill="#4e5052" /><rect x="113.1" y="742.2" width="10" height="1.8" fill="#2ec4a4" /><circle cx="123.8" cy="743.1" r="3.1" fill="#fafafa"/><path fill="url(#gdoc)" d="M179 716.9 H202.2 L212.8 727.5 V758.8 H179 Z"/><path fill="#ececec" d="M202.2 716.9 L212.8 727.5 H202.2 Z"/><path fill="#c2c2c2" d="M202.2 727.5 H212.8 V735 Z" opacity="0.7"/><rect x="179" y="757.8" width="33.8" height="1" fill="#b9b9b9" /><rect x="231" y="708" width="66.1" height="60" fill="#494e53" /><rect x="231" y="708" width="66.1" height="3" fill="#717a7e" /><rect x="298.9" y="708" width="66.2" height="60" fill="#494e53" /><rect x="298.9" y="708" width="66.2" height="3" fill="#717a7e" /><rect x="367" y="708" width="66.1" height="60" fill="#235e57" /><rect x="367" y="708" width="66.1" height="3" fill="#1f9e86" /><rect x="435" y="708" width="66.2" height="60" fill="#494e53" /><rect x="435" y="708" width="66.2" height="3" fill="#717a7e" /><rect x="503.1" y="708" width="65.9" height="60" fill="#4a3c31" /><rect x="503.1" y="708" width="65.9" height="3" fill="#b3672b" /><path fill="url(#gfold)" d="M243.8 723.5 H284.1 V754.8 H243.8 Z"/><path fill="#1f9c80" d="M243.8 718.8 H260.3 L264 722.2 L260.3 728.2 H243.8 Z"/><rect x="246.9" y="722.6" width="10.2" height="1.3" fill="#ffffff" /><rect x="246.9" y="722.6" width="3.4" height="1.3" fill="#38b6ff" /><path fill="url(#ghouse)" d="M249 739 H279 V756.9 H269 V747.1 H259 V756.9 H249 Z"/><path fill="url(#gff)" d="M338 713.8 C343 718 346 722 347.5 725.5 C349.5 724 350 722.5 350.3 721.5 C353.5 726 355 732 354.7 738 C354 750.5 344 760 332 760 C319.5 760 309.5 750 309.5 737.8 C309.5 731 312.5 725.5 317.5 721.5 C317.6 723.3 318.2 724.8 319.2 726 C320.5 724.5 322.5 723 324.8 722.5 C323.8 724.3 323.6 726 324 727.5 C327 725.5 331 725.3 334.5 726.5 C332 722.5 333.5 717.5 338 713.8 Z"/><circle cx="331.6" cy="737.6" r="9.6" fill="url(#gffg)"/><path fill="#ffb13b" d="M315.5 733.5 C318 730.5 323 730 326.5 731.8 C329 733 330.5 733 332.5 732.3 C331.5 735 329 736.2 326.5 736.2 C324.5 736.2 323.2 737 322.5 738.5 C321.5 735.5 318.5 734 315.5 733.5 Z"/><path fill="#ffcf3a" opacity="0.9" d="M336 728.5 C341.5 730 345.5 735.5 344.5 742 C343.8 747 340 751 335 752.5 C342 747.5 342.5 736 336 728.5 Z"/><rect x="380" y="718.1" width="40" height="39.6" fill="url(#gvs)" rx="2.5"/><path fill="#2a2f36" opacity="0.55" d="M411 730 L420 739 V757.7 H402 L389 745.5 Z"/><path d="M405.6 729.4 L390.4 743" stroke="#2ba0f2" stroke-width="3.6" fill="none"/><path d="M405.6 746.6 L390.4 733" stroke="#2394ea" stroke-width="3.6" fill="none"/><path fill="#2394ea" d="M405.4 726.9 L411 729.6 V746.4 L405.4 749.1 L403 747.2 V728.8 Z"/><path fill="#1b78c6" d="M405.4 726.9 L411 729.6 V746.4 L405.4 749.1 Z"/><path fill="#3a4048" d="M405.4 732.9 V743.1 L399.6 738 Z"/><rect x="450" y="718.1" width="36" height="39.6" fill="url(#gbook)" /><rect x="450" y="718.1" width="1.8" height="39.6" fill="#0f0f10" /><rect x="451.8" y="756.3" width="34.2" height="1.2" fill="#e8e8e8" /><path fill="#da2a3d" d="M452.1 718.1 H460 V735 L456.05 732.6 L452.1 735 Z"/><path fill="#1e9bf0" d="M486 720.6 C474 724 468.5 738 470 748 C470.8 753 474 756.2 486 755.3 V751 C479 752.3 475.5 750 475.2 744.5 C474.8 736 479 728.5 486 724.5 Z"/><circle cx="536.2" cy="737.9" r="20" fill="url(#gtg)"/><path fill="#1565c0" opacity="0.35" d="M541.5 747.5 L556 738 A20 20 0 0 1 540 757.5 L529.5 746.5 Z"/><path fill="#ffffff" d="M522.6 737.6 L546.4 728.6 L542.6 748 L535 742.6 L531.2 746.6 L530.2 740.9 Z"/><path fill="#c9dcee" d="M530.2 740.9 L543.6 731.6 L533.4 742 L531.2 746.6 Z"/><circle cx="555" cy="725" r="12.8" fill="#4a3c31"/><circle cx="555" cy="725" r="11" fill="#1abc9c"/><text x="555" y="731" text-anchor="middle" font-family='"Liberation Sans", "DejaVu Sans", sans-serif' font-size="17" fill="#ffffff">1</text><g fill="none" stroke="#fcfcfc" stroke-width="1.3" stroke-linejoin="round" stroke-linecap="round"><path d="M843 741.6 H855.4 L853.6 738.8 V735.6 a4.4 4.4 0 0 0 -8.8 0 V738.8 Z"/><path d="M843.2 736.2 a6 6 0 0 1 1.6 -4.6 M841.4 735.4 a8 8 0 0 1 2 -5.4 M855.2 736.2 a6 6 0 0 0 -1.6 -4.6 M857 735.4 a8 8 0 0 0 -2 -5.4" stroke-width="0.85"/></g><path d="M846.8 743.4 H851.6 a2.4 2.4 0 0 1 -4.8 0 Z" fill="#fcfcfc"/><path fill="#fcfcfc" d="M877.2 733.2 H891.1 V743.6 H888.4 L886.9 745.7 L885.4 743.6 H877.2 Z"/><rect x="874" y="729.6" width="10.2" height="9.6" fill="#2a2e35" /><path fill="#1abc9c" d="M874.7 730.2 H880.3 V732.4 H877 V738.4 H874.7 Z M877.8 733.2 H880.3 V738.4 H877.8 Z M881.1 730.2 H883.5 V738.4 H881.1 Z"/><circle cx="916.8" cy="737.8" r="7.7" fill="none" stroke="#fcfcfc" stroke-width="1.15" stroke-linejoin="round" stroke-linecap="round"/><path fill="#fcfcfc" d="M916.8 732.4 L921.4 737.4 H918.8 V742.6 H914.8 V737.4 H912.2 Z"/><circle cx="950.9" cy="737.8" r="7.7" fill="none" stroke="#fcfcfc" stroke-width="1.15" stroke-linejoin="round" stroke-linecap="round"/><rect x="947.6" y="734.4" width="2.2" height="6.8" fill="#fcfcfc" /><rect x="952" y="734.4" width="2.2" height="6.8" fill="#fcfcfc" /><rect x="975.3" y="730.6" width="19.5" height="1.4" fill="#fcfcfc" /><rect x="976.2" y="732.6" width="17.7" height="11.8" fill="none" stroke="#8d9093" stroke-width="0.9"/><path d="M981.2 735.6 L984.4 738.2 L981.2 740.8" fill="none" stroke="#fcfcfc" stroke-width="1.3" stroke-linejoin="round" stroke-linecap="round"/><path d="M985.6 741.6 H989.6" fill="none" stroke="#fcfcfc" stroke-width="1.2" stroke-linejoin="round" stroke-linecap="round"/><path d="M1012.4 738 L1026 732.2 L1023 740 M1012.4 738 L1016.2 739.8 L1026 732.2 L1017.6 741 L1017.8 744 L1019.8 741.6" fill="none" stroke="#fcfcfc" stroke-width="1.1" stroke-linejoin="round" stroke-linecap="round"/><circle cx="1023.6" cy="742.8" r="2.7" fill="#1abc9c"/><rect x="1046.5" y="732" width="13.6" height="13.2" fill="none" stroke="#fcfcfc" stroke-width="1.3" stroke-linejoin="round" stroke-linecap="round"/><rect x="1049.4" y="729.8" width="7.8" height="3.4" fill="#fcfcfc" /><rect x="1049.2" y="736.2" width="7" height="1.1" fill="#fcfcfc" /><rect x="1049.2" y="738.8" width="8.2" height="1.1" fill="#fcfcfc" /><rect x="1049.2" y="741.4" width="5.4" height="1.1" fill="#fcfcfc" /><path fill="#fcfcfc" d="M1078.6 734.4 H1081.6 L1087.2 729.4 V746.2 L1081.6 741.2 H1078.6 Z"/><path d="M1089.6 733.6 a5.6 5.6 0 0 1 0 8.4" fill="none" stroke="#fcfcfc" stroke-width="1.3" stroke-linejoin="round" stroke-linecap="round"/><path d="M1091.4 730.6 a9.6 9.6 0 0 1 0 14.4" fill="none" stroke="#7f8386" stroke-width="1.2"/><g fill="none" stroke="#fcfcfc" stroke-width="1.1" stroke-linejoin="round" stroke-linecap="round"><rect x="1152" y="730.9" width="10.6" height="11.4"/><path d="M1149.2 736 V742.6 a1.8 1.8 0 0 0 1.8 1.8 H1152.4"/></g><rect x="1156" y="742.4" width="2.8" height="2" fill="#fcfcfc" /><rect x="1152.6" y="744.1" width="7.6" height="1.5" fill="#fcfcfc" /><rect x="1146.9" y="730.3" width="4.6" height="5.6" fill="#fcfcfc" /><rect x="1148.3" y="731.7" width="1.8" height="1.9" fill="#2a2e35" /><path fill="#fcfcfc" d="M1179.7 740.8 L1186 735.2 L1192.2 740.8 Z"/><rect x="1328.7" y="726.4" width="22.8" height="23.2" fill="none" stroke="#fcfcfc" stroke-width="1.1"/><rect x="1331" y="746" width="18.4" height="1.3" fill="#fcfcfc" /></svg>
<span class="t" style="left:1110.8px;top:721.9px;font-size:23.6px;line-height:33.04px;color:#fcfcfc;letter-spacing:-0.35px;transform:scaleX(0.9644);transform-origin:0 0;">ru</span>
<span class="t" style="left:1229px;top:712.54px;font-size:25px;line-height:35.0px;color:#fcfcfc;letter-spacing:-0.016px;">22:14</span>
<span class="t" style="left:1209.7px;top:739.37px;font-size:17.9px;line-height:25.06px;color:#fcfcfc;letter-spacing:1.017px;">09.12.2021</span>
<svg style="left:0px;top:0px" width="70" height="37" viewBox="0 0 70 37" ><rect x="6.3" y="7.9" width="6.6" height="19.9" fill="#1e7fc5"/><rect x="12.9" y="7.9" width="2" height="19.9" fill="#8fc0e6"/><rect x="14.9" y="7.9" width="14.9" height="19.9" fill="#1e7fc5"/><g stroke="#ffffff" stroke-width="1.4"><path d="M17 11.2H24.5M17 14.2H26.5M17 17.2H24.5M17 20.2H26.5M17 23.2H23"/></g><g fill="#232629" stroke="#232629"><path d="M50.2 11 L55 15.8 L51.2 19.6 L46.4 14.8 Z" stroke-width="0.6"/><path d="M45.3 16.2 L49.9 20.8" stroke-width="1.8"/><path d="M47.4 18.6 L42.2 23.8" stroke-width="1.3"/></g></svg>
<svg style="left:1260px;top:0px" width="100" height="37" viewBox="0 0 100 37" ><g fill="none" stroke="#232629" stroke-width="1.35" stroke-linecap="round" stroke-linejoin="round"  stroke-linecap="butt" stroke-linejoin="miter"><path d="M15.1 15.2 L22 22 L28.9 15.2"/><path d="M52.1 11.5 L58.5 17.9 L52.1 24.3 L45.7 17.9 Z"/><path d="M76.9 12.9 L87.1 23.1 M87.1 12.9 L76.9 23.1"/></g></svg>
<svg style="left:0px;top:62px" width="70" height="70" viewBox="0 0 70 70" ><g fill="none" stroke="#ffffff" stroke-width="1.85" stroke-linecap="round" stroke-linejoin="round" ><path d="M20.2 29 a2 2 0 0 1 2 -2 H27.3 M20.2 29 V50 a2 2 0 0 0 2 2 H37 a2 2 0 0 0 2 -2 V43.6"/><path d="M30.4 18.8 H42.5 L48.6 24.9 V40.4 a2 2 0 0 1 -2 2 H30.4 a2 2 0 0 1 -2 -2 V20.8 a2 2 0 0 1 2 -2 Z"/><path d="M42 19.2 V25.4 H48.2"/></g></svg>
<svg style="left:0px;top:131px" width="70" height="70" viewBox="0 0 70 70" ><g fill="none" stroke="#838991" stroke-width="1.85" stroke-linecap="round" stroke-linejoin="round" ><circle cx="39.2" cy="29.4" r="10.6"/><path d="M31.8 37.2 L19.6 51"/></g></svg>
<svg style="left:0px;top:200px" width="70" height="70" viewBox="0 0 70 70" ><g fill="none" stroke="#838991" stroke-width="1.8" stroke-linecap="round" stroke-linejoin="round" ><circle cx="27.3" cy="22.8" r="4.5"/><circle cx="42.3" cy="29.2" r="4.5"/><circle cx="27.3" cy="46.5" r="4.5"/><path d="M27.3 27.3 V42 M42.3 33.7 C42.3 39 32 37 27.3 41"/></g><circle cx="45" cy="47.8" r="11.9" fill="#f871c0"/><text x="45" y="52.4" text-anchor="middle" font-family='"Liberation Sans", "DejaVu Sans", sans-serif' font-weight="700" font-size="13.5" fill="#ffffff">7</text></svg>
<svg style="left:0px;top:269px" width="70" height="70" viewBox="0 0 70 70" ><g fill="none" stroke="#838991" stroke-width="1.8" stroke-linecap="round" stroke-linejoin="round" ><path d="M28.8 33 V18.6 L50.6 31.8 L37.2 41"/><ellipse cx="25.5" cy="43.6" rx="6" ry="7.4"/><path d="M20 40.6 H31 M19.5 44 H16.8 M31.5 44 H34.2 M20.4 38.8 L17.6 36.2 M30.6 38.8 L33.4 36.2 M20.6 48.6 L17.6 51.4 M30.4 48.6 L33.4 51.4"/></g></svg>
<svg style="left:0px;top:338px" width="70" height="70" viewBox="0 0 70 70" ><g fill="none" stroke="#838991" stroke-width="1.8" stroke-linecap="round" stroke-linejoin="round" ><path d="M19.3 24.2 H30.4 a2 2 0 0 1 2 2 V37.9 H43.2 a2 2 0 0 1 2 2 V49.6 a2 2 0 0 1 -2 2 H19.3 a2 2 0 0 1 -2 -2 V26.2 a2 2 0 0 1 2 -2 Z"/><path d="M17.3 37.9 H32.4 V51.6"/><rect x="37.4" y="18" width="14.2" height="13.2" rx="2"/></g></svg>
<svg style="left:0px;top:407px" width="70" height="70" viewBox="0 0 70 70" ><circle cx="34.6" cy="34.5" r="16.4" fill="none" stroke="#838991" stroke-width="1.8" stroke-linecap="round" stroke-linejoin="round" /><path fill="#838991" d="M26.6 25.6 L30 28 C33 27.2 36.2 27.2 39.2 28 L42.6 25.6 C43.4 28 43.4 29.6 43 30.8 C44.6 33.2 44.4 37.6 41.6 39.6 C40.2 40.6 38.8 40.9 37.6 41.1 C38.4 42 38.5 43 38.5 44.4 V51 C36 51.6 33.2 51.6 30.7 51 V47.6 C27.6 48.4 26.6 46.6 26 45.2 C25.6 44.2 24.8 43.6 24.2 43.2 C25.6 42.8 26.6 43.8 27.2 44.8 C28.2 46.2 29.6 46.2 30.7 45.8 V44.4 C30.7 43 30.9 42 31.6 41.1 C30.4 40.9 29 40.6 27.6 39.6 C24.8 37.6 24.6 33.2 26.2 30.8 C25.8 29.6 25.8 28 26.6 25.6 Z"/></svg>
<svg style="left:0px;top:537px" width="70" height="70" viewBox="0 0 70 70" ><g fill="none" stroke="#838991" stroke-width="1.8" stroke-linecap="round" stroke-linejoin="round" ><circle cx="34.6" cy="34.9" r="16.3"/><circle cx="34.6" cy="31.2" r="7.4"/><path d="M24.6 47.6 C26.4 41 31 39 34.6 39 C38.2 39 42.8 41 44.6 47.6"/></g></svg>
<svg style="left:0px;top:606px" width="70" height="70" viewBox="0 0 70 70" ><g fill="none" stroke="#838991" stroke-width="1.8" stroke-linecap="round" stroke-linejoin="round" ><path d="M32.39 18.15 L36.81 18.15 L37.09 23.47 L40.71 24.97 L44.67 21.40 L47.80 24.53 L44.23 28.49 L45.73 32.11 L51.05 32.39 L51.05 36.81 L45.73 37.09 L44.23 40.71 L47.80 44.67 L44.67 47.80 L40.71 44.23 L37.09 45.73 L36.81 51.05 L32.39 51.05 L32.11 45.73 L28.49 44.23 L24.53 47.80 L21.40 44.67 L24.97 40.71 L23.47 37.09 L18.15 36.81 L18.15 32.39 L23.47 32.11 L24.97 28.49 L21.40 24.53 L24.53 21.40 L28.49 24.97 L32.11 23.47 Z"/><circle cx="34.6" cy="34.6" r="4"/></g></svg>
<svg style="left:440px;top:70px" width="50" height="34" viewBox="0 0 50 34" ><circle cx="17.1" cy="17.3" r="1.5" fill="#e4e4e4"/><circle cx="24.0" cy="17.3" r="1.5" fill="#e4e4e4"/><circle cx="30.9" cy="17.3" r="1.5" fill="#e4e4e4"/></svg>
<svg style="left:0px;top:0px" width="1360" height="768" viewBox="0 0 1360 768" ><path d="M77.2 125.8 L83.7 132.4 L90.2 125.8" fill="none" stroke="#c5c5c5" stroke-width="1.5" stroke-linecap="round" stroke-linejoin="round"  stroke-linecap="butt" stroke-linejoin="miter"/><path d="M95.8 156.6 L102.3 163.2 L108.8 156.6" fill="none" stroke="#c5c5c5" stroke-width="1.5" stroke-linecap="round" stroke-linejoin="round"  stroke-linecap="butt" stroke-linejoin="miter"/><path d="M80.4 622 L87.6 628.5 L80.4 635" fill="none" stroke="#c5c5c5" stroke-width="1.5" stroke-linecap="round" stroke-linejoin="round"  stroke-linecap="butt" stroke-linejoin="miter"/><path d="M80.4 653.7 L87.6 660.2 L80.4 666.7" fill="none" stroke="#c5c5c5" stroke-width="1.5" stroke-linecap="round" stroke-linejoin="round"  stroke-linecap="butt" stroke-linejoin="miter"/><g fill="none" stroke="#519aba" stroke-width="2.3" stroke-linecap="round" stroke-linejoin="round"  stroke-linecap="butt"><path d="M110.636 185.7 L108.776 197.232 M115.658 185.7 L113.798 197.232 M106.916 189.23399999999998 H118.169 M105.8 193.69799999999998 H117.053"/></g><g fill="none" stroke="#d4d7d6" stroke-width="1.9" stroke-linecap="round" stroke-linejoin="round"  stroke-linecap="butt"><path d="M97.1 216.15 H109.30 M97.1 219.88 H105.40 M97.1 223.62 H109.30 M97.1 227.35 H106.62"/></g><polygon points="100.50,244.70 102.87,251.04 109.63,251.33 104.33,255.55 106.14,262.07 100.50,258.33 94.86,262.07 96.67,255.55 91.37,251.33 98.13,251.04" fill="#cbcb41"/><g fill="none" stroke="#e37933" stroke-width="1.8" stroke-linecap="round" stroke-linejoin="round"  stroke-linecap="butt" stroke-linejoin="miter"><path d="M99.15 281.90000000000003 L94.5 286.40000000000003 L99.15 290.90000000000003 M102.65 281.90000000000003 L107.29999999999998 286.40000000000003 L102.65 290.90000000000003"/></g><g fill="none" stroke="#d4d7d6" stroke-width="1.9" stroke-linecap="round" stroke-linejoin="round"  stroke-linecap="butt"><path d="M97.1 311.19 H109.30 M97.1 314.92 H105.40 M97.1 318.66 H109.30 M97.1 322.39 H106.62"/></g></svg>
<svg style="left:0px;top:0px" width="1360" height="768" viewBox="0 0 1360 768" ><g fill="none" stroke="#e37933" stroke-width="1.8" stroke-linecap="round" stroke-linejoin="round"  stroke-linecap="butt" stroke-linejoin="miter"><path d="M525.15 82.8 L520.5 87.3 L525.15 91.8 M528.65 82.8 L533.3000000000001 87.3 L528.65 91.8"/></g><path d="M675.8 82 L687.4 93.6 M687.4 82 L675.8 93.6" fill="none" stroke="#ffffff" stroke-width="1.35" stroke-linecap="round" stroke-linejoin="round"  stroke-linecap="butt"/><g fill="none" stroke="#519aba" stroke-width="2.3" stroke-linecap="round" stroke-linejoin="round"  stroke-linecap="butt"><path d="M730.436 81.7 L728.576 93.232 M735.458 81.7 L733.5980000000001 93.232 M726.716 85.23400000000001 H737.969 M725.6 89.69800000000001 H736.8530000000001"/></g><g fill="none" stroke="#d4d7d6" stroke-width="1.9" stroke-linecap="round" stroke-linejoin="round"  stroke-linecap="butt"><path d="M914.9 81.45 H927.10 M914.9 85.18 H923.20 M914.9 88.92 H927.10 M914.9 92.65 H924.42"/></g><g fill="none" stroke="#d0d3d6" stroke-width="1.7" stroke-linecap="round" stroke-linejoin="round" ><path d="M1205.6 80.2 A10 10 0 1 1 1204.4 90.6"/><path d="M1204.3 77.6 V83.2 H1209.9" /><path d="M1214.3 81.6 V88.4 L1218.6 92.2"/></g><g fill="none" stroke="#d0d3d6" stroke-width="1.7" stroke-linecap="round" stroke-linejoin="round" ><circle cx="1245.4" cy="81" r="3.2"/><circle cx="1258.6" cy="95.2" r="3.2"/><path d="M1245.4 84.2 V91 a4 4 0 0 0 4 4 H1252.4 M1249.6 91.8 L1252.8 95 L1249.6 98.2"/><path d="M1258.6 92 V85.2 a4 4 0 0 0 -4 -4 H1251.6 M1254.4 78 L1251.2 81.2 L1254.4 84.4"/></g><g fill="none" stroke="#d0d3d6" stroke-width="1.7" stroke-linecap="round" stroke-linejoin="round" ><rect x="1280.6" y="78.2" width="17.6" height="16.8" rx="1.6"/><path d="M1289.4 78.2 V95"/></g><circle cx="1319.3999999999999" cy="87.5" r="1.5" fill="#d0d3d6"/><circle cx="1326.3" cy="87.5" r="1.5" fill="#d0d3d6"/><circle cx="1333.2" cy="87.5" r="1.5" fill="#d0d3d6"/><g fill="none" stroke="#e37933" stroke-width="1.8" stroke-linecap="round" stroke-linejoin="round"  stroke-linecap="butt" stroke-linejoin="miter"><path d="M533.75 123.0 L529.1 127.5 L533.75 132.0 M537.25 123.0 L541.9000000000001 127.5 L537.25 132.0"/></g><path d="M655.4 122.6 L662.1999999999999 129.1 L655.4 135.6" fill="none" stroke="#5b6fa6" stroke-width="1.5" stroke-linecap="round" stroke-linejoin="round"  stroke-linecap="butt" stroke-linejoin="miter"/><path d="M746.6 122.6 L753.4 129.1 L746.6 135.6" fill="none" stroke="#5b6fa6" stroke-width="1.5" stroke-linecap="round" stroke-linejoin="round"  stroke-linecap="butt" stroke-linejoin="miter"/><path d="M840.2 122.6 L847.0 129.1 L840.2 135.6" fill="none" stroke="#5b6fa6" stroke-width="1.5" stroke-linecap="round" stroke-linejoin="round"  stroke-linecap="butt" stroke-linejoin="miter"/><path d="M1021.4 122.6 L1028.2 129.1 L1021.4 135.6" fill="none" stroke="#5b6fa6" stroke-width="1.5" stroke-linecap="round" stroke-linejoin="round"  stroke-linecap="butt" stroke-linejoin="miter"/><g fill="none" stroke="#63b3f5" stroke-width="1.6" stroke-linecap="round" stroke-linejoin="round" ><path d="M672.0 124.60000000000001 L683.8000000000001 120.2 L690.9000000000001 123.60000000000001 V130.8 L679.2 136.0 L672.0 132.0 Z"/><path d="M672.0 124.60000000000001 L679.2 128.20000000000002 L690.9000000000001 123.60000000000001 M679.2 128.20000000000002 V136.0"/></g><g fill="none" stroke="#63b3f5" stroke-width="1.6" stroke-linecap="round" stroke-linejoin="round" ><path d="M762.5999999999999 124.60000000000001 L774.4 120.2 L781.5 123.60000000000001 V130.8 L769.8 136.0 L762.5999999999999 132.0 Z"/><path d="M762.5999999999999 124.60000000000001 L769.8 128.20000000000002 L781.5 123.60000000000001 M769.8 128.20000000000002 V136.0"/></g><g fill="none" stroke="#63b3f5" stroke-width="1.6" stroke-linecap="round" stroke-linejoin="round" ><path d="M857.0 124.60000000000001 L868.8000000000001 120.2 L875.9000000000001 123.60000000000001 V130.8 L864.2 136.0 L857.0 132.0 Z"/><path d="M857.0 124.60000000000001 L864.2 128.20000000000002 L875.9000000000001 123.60000000000001 M864.2 128.20000000000002 V136.0"/></g><g fill="none" stroke="#63b3f5" stroke-width="1.6" stroke-linecap="round" stroke-linejoin="round" ><path d="M1038.0 124.60000000000001 L1049.8 120.2 L1056.9 123.60000000000001 V130.8 L1045.2 136.0 L1038.0 132.0 Z"/><path d="M1038.0 124.60000000000001 L1045.2 128.20000000000002 L1056.9 123.60000000000001 M1045.2 128.20000000000002 V136.0"/></g></svg>
<svg style="left:0px;top:0px" width="1360" height="768" viewBox="0 0 1360 768" ><g fill="none" stroke="#e8e8e8" stroke-width="1.5" stroke-linecap="round" stroke-linejoin="round" ><circle cx="26.6" cy="684.4" r="2.9"/><circle cx="36.4" cy="687.6" r="2.9"/><circle cx="26.6" cy="697.4" r="2.9"/><path d="M26.6 687.3 V694.5 M36.4 690.5 C36.4 694.4 29 692.4 26.6 694.5"/></g><g fill="none" stroke="#e8e8e8" stroke-width="1.5" stroke-linecap="round" stroke-linejoin="round"  transform="translate(155.5 692) scale(0.9) translate(-155.5 -692.6)"><path d="M151.4 697.4 H150.4 a4.2 4.2 0 0 1 -0.6 -8.3 a5.9 5.9 0 0 1 11.4 -0.4 a4.4 4.4 0 0 1 -0.2 8.7 H159.6"/><path d="M155.5 700.4 V691.4 M152.3 694.4 L155.5 691.2 L158.7 694.4"/></g><g fill="none" stroke="#e8e8e8" stroke-width="1.5" stroke-linecap="round" stroke-linejoin="round" ><circle cx="198.8" cy="691.3" r="8.2"/><path d="M195.1 687.6 L202.5 695 M202.5 687.6 L195.1 695"/></g><g fill="none" stroke="#e8e8e8" stroke-width="1.5" stroke-linecap="round" stroke-linejoin="round" ><path d="M238.3 683.2 L246.4 698.8 H230.2 Z"/><path d="M238.3 688.6 V693.4 M238.3 695.6 V696.4"/></g><g fill="none" stroke="#e8e8e8" stroke-width="1.5" stroke-linecap="round" stroke-linejoin="round" ><circle cx="1192.6" cy="691.2" r="8.2"/><path d="M1186.9 697 L1198.3 685.4"/></g><g fill="none" stroke="#e8e8e8" stroke-width="1.5" stroke-linecap="round" stroke-linejoin="round" ><path d="M1320.6 696.2 H1334.8 L1333 693.4 V689.4 a5.3 5.3 0 0 0 -10.6 0 V693.4 Z"/><path d="M1326.2 698.2 a1.6 1.6 0 0 0 3 0"/></g></svg>
</body></html>
